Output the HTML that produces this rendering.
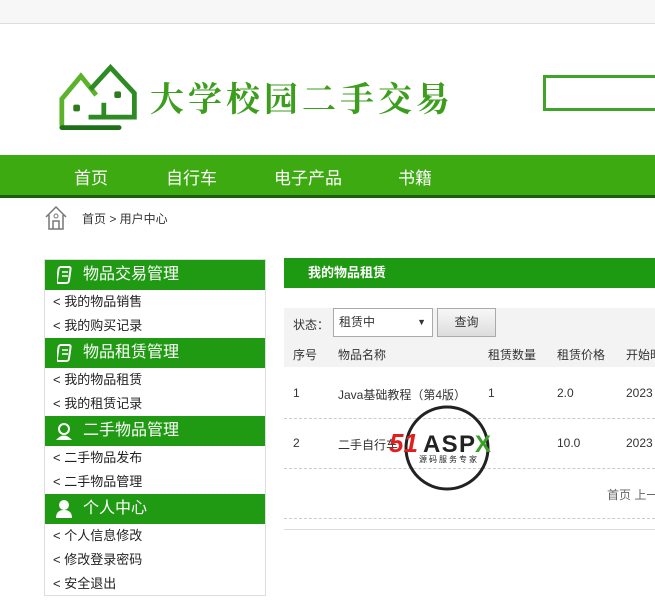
<!DOCTYPE html>
<html><head><meta charset="utf-8"><style>
*{margin:0;padding:0;box-sizing:border-box}
body{width:655px;height:603px;overflow:hidden;background:#fff;font-family:"Liberation Sans","Noto Sans CJK SC",sans-serif;position:relative;color:#333}
.a{position:absolute}
.top{left:0;top:0;width:655px;height:24px;background:#f7f7f7;border-bottom:1px solid #ddd}
.title{left:150px;top:72px;font-family:"Noto Serif CJK SC",serif;font-size:34px;color:#3c9e1c;font-weight:bold;letter-spacing:4px;white-space:nowrap}
.search{left:543px;top:75px;width:130px;height:36px;border:3px solid #3ea52a}
.nav{left:0;top:155px;width:655px;height:40px;background:#3eaa12;border-bottom:3px solid #1c5c0c;box-sizing:content-box}
.nav span{position:absolute;top:9px;color:#fff;font-size:17px}
.bc{left:82px;top:210px;font-size:12px;color:#333}
.side{left:44px;top:259px;width:222px;height:337px;border:1px solid #ddd}
.h{position:absolute;left:0;width:220px;height:30px;background:#1f9a12;color:#fff;font-size:16px;line-height:30px;padding-left:38px}
.i{position:absolute;left:8px;font-size:13px;color:#222;line-height:24px}
.ch{left:284px;top:258px;width:371px;height:30px;background:#1e9a12;color:#fff;font-weight:bold;font-size:13px;line-height:30px;padding-left:24px}
.gray{left:284px;top:308px;width:371px;height:59px;background:#f3f3f3}
.t{position:absolute;font-size:12px;color:#333;white-space:nowrap}
.dash{position:absolute;left:284px;width:371px;border-top:1px dashed #ccc}
</style></head><body>
<div class="a top"></div>
<svg class="a" style="left:58px;top:64px" width="84" height="68" viewBox="0 0 88 70">
<path d="M4 64V36L24 12L40 32" fill="none" stroke="#5cb22a" stroke-width="5"/>
<path d="M34 26L55 3L80 30V55H32" fill="none" stroke="#2e8a22" stroke-width="5"/>
<path d="M4 66H64" stroke="#1e6e1a" stroke-width="5" stroke-linecap="round"/>
<path d="M48 40V55" stroke="#2e8a22" stroke-width="5"/>
<rect x="16" y="42" width="7" height="7" rx="2" fill="#2e7a1e"/>
<rect x="59" y="28" width="7" height="7" rx="2" fill="#2e7a1e"/>
</svg>
<div class="a title">大学校园二手交易</div>
<div class="a search"></div>
<div class="a nav"><span style="left:74px">首页</span><span style="left:166px">自行车</span><span style="left:274px">电子产品</span><span style="left:398px">书籍</span></div>
<svg class="a" style="left:44px;top:205px" width="24" height="26" viewBox="0 0 24 26"><path d="M2 12L12 2L22 12M5 10V24H19V10M9 24V16H15V24" fill="none" stroke="#777" stroke-width="1.5"/><circle cx="12" cy="11" r="2" fill="none" stroke="#777"/></svg>
<div class="a bc">首页 &gt; 用户中心</div>
<div class="a side">
<div class="h" style="top:0">物品交易管理</div>
<div class="i" style="top:30px">&lt; 我的物品销售</div><div class="i" style="top:54px">&lt; 我的购买记录</div>
<div class="h" style="top:78px">物品租赁管理</div>
<div class="i" style="top:108px">&lt; 我的物品租赁</div><div class="i" style="top:132px">&lt; 我的租赁记录</div>
<div class="h" style="top:156px">二手物品管理</div>
<div class="i" style="top:186px">&lt; 二手物品发布</div><div class="i" style="top:210px">&lt; 二手物品管理</div>
<div class="h" style="top:234px">个人中心</div>
<div class="i" style="top:264px">&lt; 个人信息修改</div><div class="i" style="top:288px">&lt; 修改登录密码</div><div class="i" style="top:312px">&lt; 安全退出</div>
<svg style="position:absolute;left:12px;top:6px" width="16" height="18"><rect x="2" y="1" width="12" height="16" rx="2" fill="none" stroke="#fff" stroke-width="2" transform="skewX(-8)"/><path d="M5 6H11M5 10H11" stroke="#fff" stroke-width="1.5"/></svg>
<svg style="position:absolute;left:12px;top:84px" width="16" height="18"><rect x="2" y="1" width="12" height="16" rx="2" fill="none" stroke="#fff" stroke-width="2" transform="skewX(-8)"/><path d="M5 6H11M5 10H11" stroke="#fff" stroke-width="1.5"/></svg>
<svg style="position:absolute;left:10px;top:162px" width="18" height="18"><circle cx="9" cy="7" r="5" fill="none" stroke="#fff" stroke-width="2"/><path d="M1 18Q9 9 17 18Z" fill="#fff"/></svg>
<svg style="position:absolute;left:10px;top:240px" width="18" height="18"><circle cx="9" cy="5" r="5" fill="#fff"/><path d="M1 18Q1 10 9 10Q17 10 17 18Z" fill="#fff"/></svg>
</div>
<div class="a ch">我的物品租赁</div>
<div class="a gray"></div>
<div class="t" style="left:293px;top:316px">状态：</div>
<div class="a" style="left:333px;top:308px;width:100px;height:29px;background:#fff;border:1px solid #aaa;font-size:12px;line-height:27px;padding-left:5px">租赁中<span style="position:absolute;right:6px;font-size:9px">▼</span></div>
<div class="a" style="left:437px;top:308px;width:59px;height:29px;background:linear-gradient(#f7f7f7,#ddd);border:1px solid #aaa;font-size:12px;line-height:27px;text-align:center">查询</div>
<div class="t" style="left:293px;top:346px">序号</div><div class="t" style="left:338px;top:346px">物品名称</div><div class="t" style="left:488px;top:346px">租赁数量</div><div class="t" style="left:557px;top:346px">租赁价格</div><div class="t" style="left:626px;top:346px">开始时间</div>
<div class="t" style="left:293px;top:386px">1</div><div class="t" style="left:338px;top:386px">Java基础教程（第4版）</div><div class="t" style="left:488px;top:386px">1</div><div class="t" style="left:557px;top:386px">2.0</div><div class="t" style="left:626px;top:386px">2023</div>
<div class="dash" style="top:418px"></div>
<div class="t" style="left:293px;top:436px">2</div><div class="t" style="left:338px;top:436px">二手自行车</div><div class="t" style="left:557px;top:436px">10.0</div><div class="t" style="left:626px;top:436px">2023</div>
<div class="dash" style="top:468px"></div>
<div class="t" style="left:607px;top:486px;color:#666">首页 上一页</div>
<div class="dash" style="top:518px"></div>
<div class="a" style="left:284px;top:529px;width:371px;border-top:1px solid #ddd"></div>
<svg class="a" style="left:385px;top:400px" width="130" height="96">
<circle cx="62" cy="48" r="41" fill="none" stroke="#222" stroke-width="3"/>
<rect x="30" y="52" width="60" height="12" fill="#fff"/>
<text x="4" y="52" font-family="Liberation Sans" font-weight="bold" font-style="italic" font-size="26" fill="#e02020">51</text>
<text x="38" y="52" font-family="Liberation Sans" font-weight="bold" font-size="24" fill="#222" textLength="52">ASP</text>
<text x="90" y="52" font-family="Liberation Sans" font-weight="bold" font-size="24" fill="#3aa02a">X</text>
<text x="34" y="62" font-family="Noto Sans CJK SC" font-size="8" fill="#222" letter-spacing="2">源码服务专家</text>
</svg>
</body></html>
